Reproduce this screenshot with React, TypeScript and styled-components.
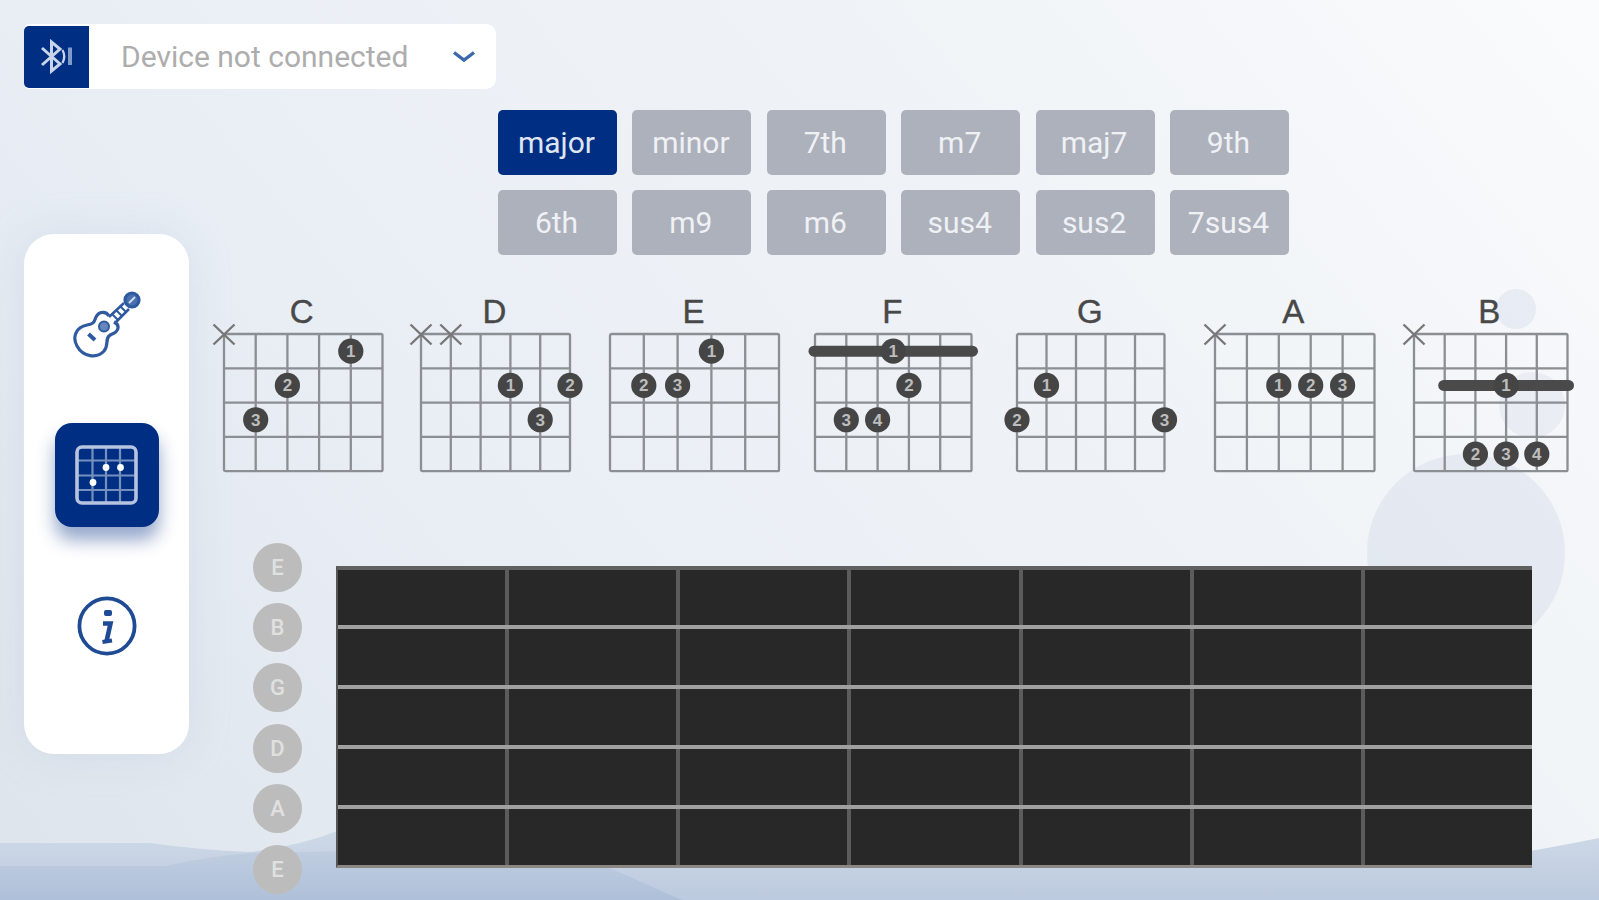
import React, { useState } from 'react'
import styled, { createGlobalStyle, css } from 'styled-components'

const GlobalStyle = createGlobalStyle`
  * {
    box-sizing: border-box;
  }
  body {
    margin: 0;
    overflow: hidden;
    font-family: Roboto, 'Liberation Sans', sans-serif;
  }
`

const Page = styled.div`
  position: relative;
  width: 1599px;
  height: 900px;
  overflow: hidden;
  background: linear-gradient(50deg, #dee4eb 0%, #e9eef5 33%, #eff3f7 66%, #fafbfc 100%);
`

const Scenery = styled.svg`
  position: absolute;
  left: 0;
  top: 0;
`

const Screen = styled.div`
  position: relative;
  display: flex;
  flex-direction: column;
  padding: 24px 0 0 24px;
`

const DeviceSelect = styled.div`
  display: flex;
  align-items: center;
  width: 472px;
  height: 65px;
  padding-right: 20px;
  background: #fff;
  border-radius: 5px 10px 10px 5px;
`

const BluetoothBox = styled.div`
  display: flex;
  align-items: center;
  justify-content: center;
  width: 65px;
  height: 62px;
  background: #002e82;
  border-radius: 5px 0 0 5px;
`

const DeviceName = styled.div`
  flex: 1;
  padding-left: 32px;
  font-size: 30px;
  line-height: 64px;
  color: #adadad;
  white-space: nowrap;
`

const Body = styled.div`
  display: flex;
  align-items: flex-start;
`

const Sidebar = styled.nav`
  display: flex;
  flex-direction: column;
  align-items: center;
  gap: 47px;
  width: 165px;
  height: 520px;
  margin-top: 145px;
  padding-top: 38px;
  background: #fff;
  border-radius: 30px;
  box-shadow: 0 0 40px rgba(170, 190, 220, 0.28);
`

const NavItem = styled.div<{ $active?: boolean }>`
  display: flex;
  align-items: center;
  justify-content: center;
  width: 104px;
  height: 104px;
  border-radius: 17px;
  cursor: pointer;
  ${props => props.$active && css`
    background: #002e82;
    box-shadow: 0 13px 18px rgba(0, 46, 130, 0.42);
  `}
`

const Content = styled.main`
  display: flex;
  flex-direction: column;
  padding-top: 21px;
`

const ChordTypes = styled.div`
  display: grid;
  grid-template-columns: repeat(6, 119px);
  grid-auto-rows: 65px;
  column-gap: 15.4px;
  row-gap: 15px;
  padding-left: 309px;
`

const TypeButton = styled.div<{ $active: boolean }>`
  display: flex;
  align-items: center;
  justify-content: center;
  padding-right: 2px;
  border-radius: 5px;
  font-size: 30px;
  cursor: pointer;
  color: ${props => props.$active ? '#dfe6f2' : '#f0f1f5'};
  background: ${props => props.$active ? '#002e82' : '#acb1bc'};
`

const ChordList = styled.div`
  display: flex;
  margin-top: 40px;
  padding-left: 34.5px;
`

const ChordBlock = styled.div<{ $width: number, $gap: number }>`
  width: ${props => props.$width}px;
  margin-right: ${props => props.$gap}px;
  flex-shrink: 0;

  svg {
    display: block;
    overflow: visible;
  }
`

const ChordName = styled.div`
  height: 38.5px;
  padding-right: 2px;
  font-family: 'Liberation Sans', sans-serif;
  font-size: 33px;
  line-height: 34px;
  text-align: center;
  color: #484848;
  -webkit-text-stroke: 0.4px #484848;
`

const FretSection = styled.div`
  display: flex;
  margin-top: 72px;
  padding-left: 64px;
`

const Tuning = styled.div`
  display: flex;
  flex-direction: column;
  gap: 11.4px;
`

const StringButton = styled.div`
  display: flex;
  align-items: center;
  justify-content: center;
  width: 49px;
  height: 49px;
  border-radius: 50%;
  background: #bcbcbc;
  color: #e0e0e0;
  font-size: 22px;
  font-weight: 500;
`

const Board = styled.div`
  width: 1196px;
  height: 302px;
  margin: 23px 0 0 34px;
  display: flex;
  flex-direction: column;
  background: #282828;
  border-top: 4px solid #606060;
  border-bottom: 3px solid #8c8783;
  border-left: 2px solid #555;
`

const StringRow = styled.div`
  display: flex;
  flex: 1;

  &:not(:last-child) {
    border-bottom: 4px solid #a0a0a0;
  }
`

const Fret = styled.div`
  flex: 1;

  &:not(:last-child) {
    border-right: 4px solid #5c5c5c;
  }
`

type DotType = { string: number, fret: number, finger: number }

type ChordType = {
  name: string
  width: number
  gap: number
  muted: number[]
  dots: DotType[]
  barre?: { from: number, to: number, fret: number }
}

const chords: ChordType[] = [
  {
    name: 'C', width: 158.5, gap: 39, muted: [0],
    dots: [{ string: 4, fret: 1, finger: 1 }, { string: 2, fret: 2, finger: 2 }, { string: 1, fret: 3, finger: 3 }]
  },
  {
    name: 'D', width: 149, gap: 40, muted: [0, 1],
    dots: [{ string: 3, fret: 2, finger: 1 }, { string: 5, fret: 2, finger: 2 }, { string: 4, fret: 3, finger: 3 }]
  },
  {
    name: 'E', width: 169, gap: 36, muted: [],
    dots: [{ string: 3, fret: 1, finger: 1 }, { string: 1, fret: 2, finger: 2 }, { string: 2, fret: 2, finger: 3 }]
  },
  {
    name: 'F', width: 156.5, gap: 45.5, muted: [],
    barre: { from: 0, to: 5, fret: 1 },
    dots: [
      { string: 2.5, fret: 1, finger: 1 }, { string: 3, fret: 2, finger: 2 },
      { string: 1, fret: 3, finger: 3 }, { string: 2, fret: 3, finger: 4 }
    ]
  },
  {
    name: 'G', width: 147.5, gap: 50, muted: [],
    dots: [{ string: 1, fret: 2, finger: 1 }, { string: 0, fret: 3, finger: 2 }, { string: 5, fret: 3, finger: 3 }]
  },
  {
    name: 'A', width: 159.5, gap: 39.5, muted: [0],
    dots: [{ string: 2, fret: 2, finger: 1 }, { string: 3, fret: 2, finger: 2 }, { string: 4, fret: 2, finger: 3 }]
  },
  {
    name: 'B', width: 153.5, gap: 0, muted: [0],
    barre: { from: 1, to: 5, fret: 2 },
    dots: [
      { string: 3, fret: 2, finger: 1 }, { string: 2, fret: 4, finger: 2 },
      { string: 3, fret: 4, finger: 3 }, { string: 4, fret: 4, finger: 4 }
    ]
  }
]

const chordTypes = ['major', 'minor', '7th', 'm7', 'maj7', '9th', '6th', 'm9', 'm6', 'sus4', 'sus2', '7sus4']
const tuning = ['E', 'B', 'G', 'D', 'A', 'E']

const FRET_STEP = 34.3

const Chord = ({ name, width, gap, muted, dots, barre }: ChordType) => {
  const step = width / 5
  const height = FRET_STEP * 4
  const dotY = (fret: number) => (fret - 0.5) * FRET_STEP

  return <ChordBlock $width={width} $gap={gap}>
    <ChordName>{name}</ChordName>
    <svg width={width} height={height}>
      <g stroke={'#8b8e92'} strokeWidth={2.3} fill={'none'}>
        <rect width={width} height={height} rx={1.5}/>
        {[1, 2, 3].map(i => <path key={i} d={`M0 ${i * FRET_STEP}H${width}`}/>)}
        {[1, 2, 3, 4].map(i => <path key={i} d={`M${i * step} 0V${height}`}/>)}
      </g>
      {muted.map(s => <path
        key={s}
        d={`M${s * step - 10.5} -9.5l21 20m0 -20l-21 20`}
        stroke={'#777'}
        strokeWidth={2.4}
      />)}
      {barre && <path
        d={`M${barre.from * step - 1} ${dotY(barre.fret)}H${barre.to * step + 1}`}
        stroke={'#4a4a4a'}
        strokeWidth={11}
        strokeLinecap={'round'}
      />}
      {dots.map(dot => <g key={dot.finger}>
        <circle cx={dot.string * step} cy={dotY(dot.fret)} r={12.6} fill={'#454545'}/>
        <text
          x={dot.string * step}
          y={dotY(dot.fret) + 6}
          fontSize={17}
          fontWeight={700}
          fontFamily={'Liberation Sans, sans-serif'}
          textAnchor={'middle'}
          fill={'#bdbdbd'}
        >{dot.finger}</text>
      </g>)}
    </svg>
  </ChordBlock>
}

const BluetoothIcon = () => <svg width="34" height="36" viewBox="0 0 34 36" fill="none" stroke="#c9d5ea" strokeWidth="3">
  <path d="M2 9L20 25L11.500 32V3L20 10L2 26"/>
  <path d="M22.500 11Q26 17.500 22.500 24" strokeWidth="2.200"/>
  <path d="M30 8.500V26" strokeWidth="4" stroke="#7f9acb"/>
</svg>

const ChevronIcon = () => <svg width="24" height="14" viewBox="0 0 24 14" fill="none" stroke="#3d68aa" strokeWidth="3.400">
  <path d="M2 2.500L12 10L22 2.500"/>
</svg>

const GuitarIcon = () => <svg width="68" height="67" viewBox="0 0 68 67" fill="none" stroke="#2f5a9f" strokeWidth="3.200">
  <path d="M36 25C33 20 26 20 23 26C21 32 20 33 14 34C3 36 -1 46 4 55C10 66 24 68 31 60C36 54 32 49 36 45C39 42 44 43 45 37C45.500 34 43 32 41 31"/>
  <path d="M36 26L51 12M42 32L56 18" strokeWidth="2.600"/>
  <path d="M39 23L45 29M43 19L49 25M47 15L53 21" strokeWidth="2"/>
  <circle cx="31" cy="35.500" r="5" fill="#6587bd" strokeWidth="2"/>
  <path d="M15.500 43L22 49" strokeWidth="4"/>
  <circle cx="59" cy="9" r="7" fill="#4a70b0"/>
  <path d="M56 12L62 6" stroke="#d5dff0" strokeWidth="1.800"/>
</svg>

const FretboardIcon = () => <svg width="63" height="60" viewBox="0 0 63 60" fill="none" stroke="#b6c4df">
  <rect x="2" y="2" width="59" height="56" rx="5" strokeWidth="3.600"/>
  <path d="M17.500 2V58M31 2V58M45 2V58M2 15.500H61M2 30.500H61M2 45H61" strokeWidth="2.200" strokeOpacity="0.65"/>
  <g fill="#fff" stroke="none">
    <circle cx="31" cy="22.500" r="3.400"/>
    <circle cx="45.500" cy="22.500" r="3.400"/>
    <circle cx="18" cy="37.500" r="3.400"/>
  </g>
</svg>

const InfoIcon = () => <svg width="60" height="60" viewBox="0 0 60 60" fill="none" stroke="#1f4a94">
  <circle cx="30" cy="30" r="27.600" strokeWidth="3.800"/>
  <rect x="27" y="14" width="8" height="6" rx="2" fill="#1f4a94" stroke="none"/>
  <path d="M26 27.500H33.500L29.500 45.500" strokeWidth="4.600"/>
  <path d="M25.500 46L35 44.500" strokeWidth="4"/>
</svg>

const Background = () => <Scenery width="1599" height="900" viewBox="0 0 1599 900">
  <defs>
    <linearGradient id="farHill" x1="0" y1="0" x2="0" y2="1">
      <stop offset="0" stopColor="#d3dde9"/>
      <stop offset="1" stopColor="#bccadf"/>
    </linearGradient>
    <linearGradient id="nearHill" x1="0" y1="0" x2="0" y2="1">
      <stop offset="0" stopColor="#c0cde0"/>
      <stop offset="1" stopColor="#aec0d9"/>
    </linearGradient>
  </defs>
  <g fill="#ccd5e6">
    <circle cx="1516" cy="309" r="20" fillOpacity="0.33"/>
    <circle cx="1532" cy="405" r="33" fillOpacity="0.28"/>
    <circle cx="1466" cy="553" r="99" fillOpacity="0.36"/>
  </g>
  <path d="M0 843H150Q200 850 250 852Q300 846 340 830Q800 790 1200 850Q1400 880 1530 851Q1570 844 1599 838V900H0Z" fill="url(#farHill)"/>
  <path d="M0 866H165Q215 855 255 853Q500 846 612 869L682 900H0Z" fill="url(#nearHill)"/>
</Scenery>

const App = () => {
  const [activeType, setActiveType] = useState('major')

  return <Page>
    <GlobalStyle/>
    <Background/>
    <Screen>
      <DeviceSelect>
        <BluetoothBox><BluetoothIcon/></BluetoothBox>
        <DeviceName>Device not connected</DeviceName>
        <ChevronIcon/>
      </DeviceSelect>
      <Body>
        <Sidebar>
          <NavItem><GuitarIcon/></NavItem>
          <NavItem $active><FretboardIcon/></NavItem>
          <NavItem><InfoIcon/></NavItem>
        </Sidebar>
        <Content>
          <ChordTypes>
            {chordTypes.map(type => <TypeButton
              key={type}
              $active={type === activeType}
              onClick={() => setActiveType(type)}
            >{type}</TypeButton>)}
          </ChordTypes>
          <ChordList>
            {chords.map(chord => <Chord key={chord.name} {...chord}/>)}
          </ChordList>
          <FretSection>
            <Tuning>
              {tuning.map((note, i) => <StringButton key={i}>{note}</StringButton>)}
            </Tuning>
            <Board>
              {tuning.slice(1).map((note, i) => <StringRow key={i}>
                {[1, 2, 3, 4, 5, 6, 7].map(fret => <Fret key={fret}/>)}
              </StringRow>)}
            </Board>
          </FretSection>
        </Content>
      </Body>
    </Screen>
  </Page>
}

export default App
